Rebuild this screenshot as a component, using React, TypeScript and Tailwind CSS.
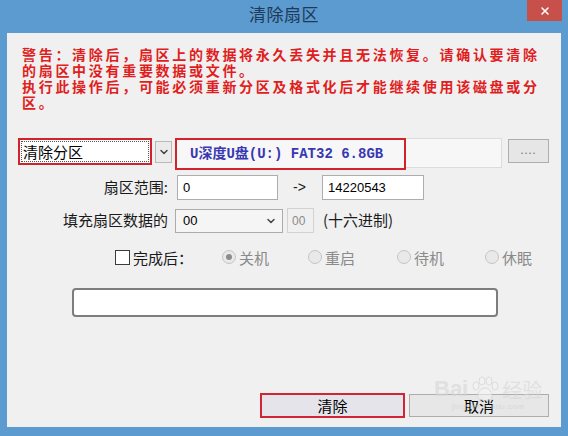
import { ChevronDown, X } from 'lucide-react'

const cjk = { fontFamily: '"Noto Sans CJK SC", "Noto Sans", sans-serif' }
const mono = { fontFamily: '"Liberation Mono", "Noto Sans CJK SC", monospace' }

function Radio({ label, checked = false }: { label: string; checked?: boolean }) {
  return (
    <div className="flex items-center gap-[3px]">
      <span className="flex h-[14px] w-[14px] items-center justify-center rounded-full border border-[#c4c4c4] bg-[#e9e9e9]">
        {checked && <span className="h-[6px] w-[6px] rounded-full bg-[#8c8c8c]" />}
      </span>
      <span className="text-[15px] leading-none text-[#8a8a8a]">{label}</span>
    </div>
  )
}

export default function App() {
  return (
    <div className="relative flex h-[436px] w-[568px] flex-col bg-[#5b9bcf]" style={cjk}>
      {/* 標題列 */}
      <div className="grid h-[33px] grid-cols-[1fr_auto_1fr]">
        <div />
        <div className="pt-[4px] text-[17px] leading-[20px] tracking-[0.5px] text-[#1f3a58]">清除扇区</div>
        <div className="flex justify-end pr-[6px]">
          <div className="flex h-[21px] w-[35px] items-center justify-center bg-[#c8504b]">
            <X size={12} strokeWidth={3} className="text-white" />
          </div>
        </div>
      </div>

      {/* 內容區 */}
      <div className="mx-[7px] mb-[9px] flex flex-1 flex-col bg-[#f0f0f0]">
        <div className="mt-[13px] pl-[15px] text-[14px] font-bold leading-[16px] tracking-[2.7px] text-[#e01e1e]">
          <div>警告：清除后，扇区上的数据将永久丢失并且无法恢复。请确认要清除</div>
          <div>的扇区中没有重要数据或文件。</div>
          <div>执行此操作后，可能必须重新分区及格式化后才能继续使用该磁盘或分</div>
          <div>区。</div>
        </div>

        {/* 分區選擇 */}
        <div className="mt-[28px] flex h-[32px] items-start pl-[11px]">
          <div className="flex h-[27px] w-[134px] items-center border-2 border-[#d2232a] bg-white p-[1px]">
            <div className="flex h-full flex-1 items-center border border-dotted border-[#555] pl-[1px] text-[15px] leading-none text-black">
              清除分区
            </div>
          </div>
          <div className="ml-[3px] mt-[3px] flex h-[22px] w-[17px] items-center justify-center border border-[#b9b9b9] bg-[#ebebeb]">
            <ChevronDown size={12} strokeWidth={3} className="text-[#444]" />
          </div>
          <div className="ml-[3px] flex h-[32px] w-[231px] items-center border-2 border-[#d2232a] bg-[#f7f7f7] pl-[13px] text-[14px] font-bold text-[#3838b2]" style={mono}>
            U深度U盘(U:) FAT32 6.8GB
          </div>
          <div className="h-[30px] w-[96px] border border-l-0 border-[#dcdcdc] bg-[#f7f7f7]" />
          <div className="ml-[6px] mt-[1px] flex h-[24px] w-[41px] items-center justify-center border border-[#adadad] bg-[#e6e6e6] pb-[4px] text-[11px] tracking-[1px] text-[#777]">
            ....
          </div>
        </div>

        {/* 扇區範圍 */}
        <div className="mt-[5px] flex h-[25px] items-center">
          <div className="w-[161px] text-right text-[15px] text-[#1a1a1a]">扇区范围:</div>
          <div className="ml-[9px] flex h-[25px] w-[101px] items-center border border-[#abadb3] bg-white pl-[5px] text-[13px] text-black" style={{ fontFamily: '"Liberation Sans", sans-serif' }}>
            0
          </div>
          <div className="ml-[15px] w-[16px] text-[14px] text-[#1a1a1a]" style={{ fontFamily: '"Liberation Sans", sans-serif' }}>-&gt;</div>
          <div className="ml-[13px] flex h-[25px] w-[102px] items-center border border-[#abadb3] bg-white pl-[5px] text-[13px] text-black" style={{ fontFamily: '"Liberation Sans", sans-serif' }}>
            14220543
          </div>
        </div>

        {/* 填充資料 */}
        <div className="mt-[8px] flex h-[25px] items-center">
          <div className="w-[161px] text-right text-[15px] text-[#1a1a1a]">填充扇区数据的</div>
          <div className="ml-[7px] flex h-[24px] w-[108px] items-center justify-between border border-[#acacac] bg-[#f5f5f5] pl-[7px] pr-[5px] text-[13px] text-black" style={{ fontFamily: '"Liberation Sans", sans-serif' }}>
            00
            <ChevronDown size={12} strokeWidth={3} className="text-[#444]" />
          </div>
          <div className="ml-[4px] flex h-[25px] w-[27px] items-center border border-[#d2d2d2] bg-[#f0f0f0] pl-[4px] text-[12px] text-[#8a8a8a]" style={{ fontFamily: '"Liberation Sans", sans-serif' }}>
            00
          </div>
          <div className="ml-[9px] text-[15px] text-[#1a1a1a]">(十六进制)</div>
        </div>

        {/* 完成後 */}
        <div className="mt-[12px] flex h-[24px] items-center pl-[108px]">
          <span className="h-[15px] w-[15px] border border-[#3c3c3c] bg-white" />
          <div className="ml-[3px] w-[89px] text-[15px] leading-none text-[#1a1a1a]">完成后：</div>
          <div className="w-[86px]"><Radio label="关机" checked /></div>
          <div className="w-[89px]"><Radio label="重启" /></div>
          <div className="w-[88px]"><Radio label="待机" /></div>
          <Radio label="休眠" />
        </div>

        {/* 進度框 */}
        <div className="ml-[65px] mt-[19px] h-[29px] w-[426px] rounded-[4px] border-2 border-[#7d7d7d] bg-white" />

        {/* 按鈕 */}
        <div className="mt-[76px] flex items-start pl-[253px]">
          <div className="flex h-[25px] w-[145px] items-center justify-center border-2 border-[#d02535] bg-[#e4e4ea] text-[15px] leading-none text-black">
            清除
          </div>
          <div className="ml-[4px] mt-[1px] flex h-[23px] w-[140px] items-center justify-center border border-[#adadad] bg-[#e7e7e7] text-[15px] leading-none text-black">
            取消
          </div>
        </div>
      </div>

      {/* 浮水印 */}
      <div className="pointer-events-none absolute left-[434px] top-[376px] flex flex-col items-center opacity-60">
        <div className="flex items-end gap-[2px]">
          <span className="text-[22px] font-bold leading-none text-[#d6d6d6]" style={{ fontFamily: '"Liberation Sans", sans-serif' }}>Bai</span>
          <svg width="30" height="26" viewBox="0 0 30 26" className="mb-[-2px]">
            <g fill="#f4f4f4" stroke="#cfcfcf" strokeWidth="1">
              <ellipse cx="6" cy="10" rx="3" ry="4" />
              <ellipse cx="12" cy="5" rx="3" ry="4" />
              <ellipse cx="19" cy="5" rx="3" ry="4" />
              <ellipse cx="25" cy="10" rx="3" ry="4" />
              <path d="M15 12 C9 12 6 20 9 23 C12 25 18 25 21 23 C24 20 21 12 15 12 Z" />
            </g>
          </svg>
          <span className="text-[20px] leading-none text-[#d6d6d6]">经验</span>
        </div>
        <div className="mt-[3px] text-[8px] leading-none tracking-[0.5px] text-[#cfcfcf]" style={{ fontFamily: '"Liberation Sans", sans-serif' }}>
          jingyan.baidu.com
        </div>
      </div>
    </div>
  )
}
